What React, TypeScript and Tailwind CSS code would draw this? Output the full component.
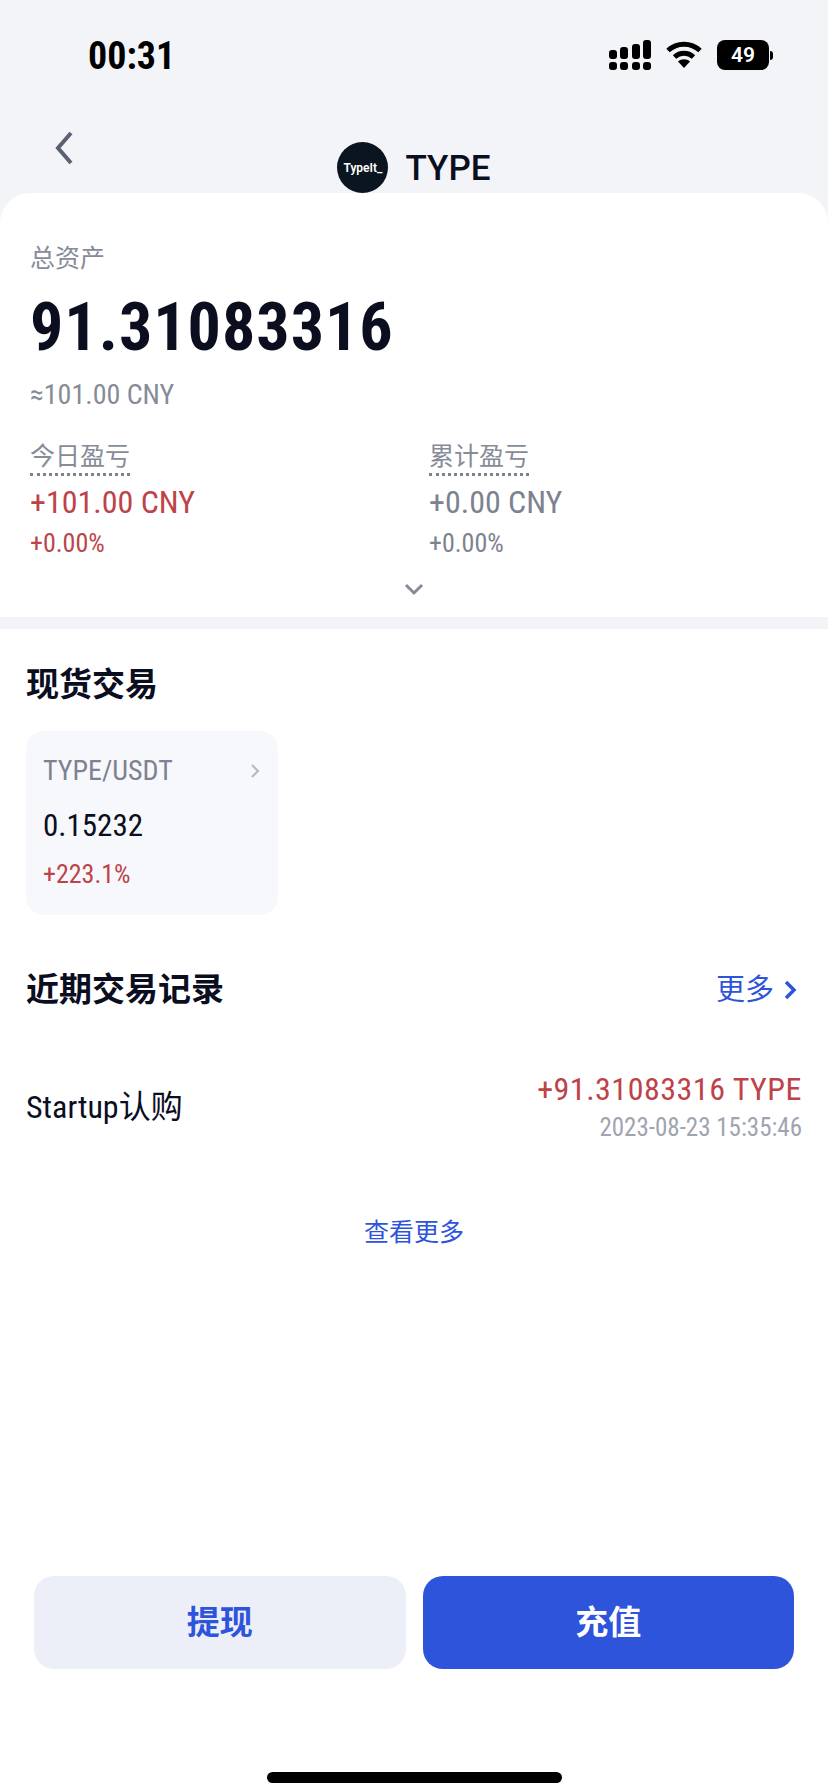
import type { ReactNode } from "react";

const SANS = "font-['Roboto','Noto_Sans_CJK_SC',sans-serif]";
const NARROW = "font-['Liberation_Sans_Narrow','Roboto_Condensed','Noto_Sans_CJK_SC',sans-serif]";

function Label({ children }: { children: ReactNode }) {
  return (
    <span className="inline-block border-b-[3px] border-dotted border-[#7d8290] pb-[1px] text-[25px] leading-[30px] text-[#868b98]">
      {children}
    </span>
  );
}

function Pnl({ label, value, pct, tone }: { label: string; value: string; pct: string; tone: string }) {
  return (
    <div className="w-[399px] shrink-0">
      <Label>{label}</Label>
      <div className={`mt-[8px] text-[32px] leading-[36px] ${NARROW} ${tone}`}>{value}</div>
      <div className={`mt-[7px] text-[26px] leading-[32px] ${NARROW} ${tone}`}>{pct}</div>
    </div>
  );
}

export default function App() {
  return (
    <div className={`flex h-[1792px] w-[828px] flex-col overflow-hidden bg-[#f2f4f8] text-[#0b0e1f] ${SANS}`}>
      <div className="flex h-[126px] shrink-0 items-start justify-between pl-[88px] pr-[55px] pt-[35px]">
        <span className={`text-[38px] font-bold leading-[42px] text-black ${NARROW}`}>00:31</span>
        <div className="mt-[5px] flex items-center gap-[15px]">
          <svg width="42" height="30" viewBox="0 0 42 30" fill="black">
            <rect x="0" y="10" width="8" height="9" rx="3" />
            <rect x="11" y="7" width="8" height="12" rx="3" />
            <rect x="23" y="4" width="8" height="15" rx="3" />
            <rect x="34" y="0" width="8" height="19" rx="3" />
            <rect x="0" y="22" width="8" height="8" rx="3" />
            <rect x="11" y="22" width="8" height="8" rx="3" />
            <rect x="23" y="22" width="8" height="8" rx="3" />
            <rect x="34" y="22" width="8" height="8" rx="3" />
          </svg>
          <svg width="36" height="28" viewBox="0 0 36 28" fill="none" stroke="black" strokeWidth="5">
            <path d="M2 9.5C11 1 25 1 34 9.5" />
            <path d="M8.5 16C14 11 22 11 27.5 16" />
            <path d="M18 27l-6-6.5c3.400-3 8.600-3 12 0z" fill="black" stroke="none" />
          </svg>
          <div className="flex items-center gap-[1px]">
            <span className="flex h-[30px] w-[52px] items-center justify-center rounded-[8px] bg-black text-[21px] font-semibold leading-none text-white">
              49
            </span>
            <span className="h-[9px] w-[3px] rounded-r-full bg-black" />
          </div>
        </div>
      </div>

      <div className="relative flex h-[67px] shrink-0 items-end justify-center">
        <svg className="absolute left-[52px] top-[4px]" width="26" height="36" viewBox="0 0 26 36" fill="none" stroke="#5b6072" strokeWidth="4">
          <path d="M19 3L6 18l13 15" />
        </svg>
        <div className="flex items-center gap-[17px]">
          <div className="flex h-[51px] w-[51px] items-center justify-center rounded-full bg-[#0b1520] text-[12px] font-semibold text-white">
            TypeIt_
          </div>
          <span className="pt-[3px] text-[35px] font-medium leading-[48px] text-[#0b0e1f]">TYPE</span>
        </div>
      </div>

      <div className="flex min-h-0 flex-1 flex-col rounded-t-[30px] bg-white">
        <div className="px-[30px] pt-[51px]">
          <div className="text-[25px] leading-[30px] text-[#868b98]">总资产</div>
          <div className={`mt-[19px] text-[66px] font-bold leading-[70px] tracking-[1px] ${NARROW}`}>91.31083316</div>
          <div className={`mt-[16px] text-[28px] leading-[32px] text-[#868b98] ${NARROW}`}>≈101.00 CNY</div>
          <div className="mt-[31px] flex">
            <Pnl label="今日盈亏" value="+101.00 CNY" pct="+0.00%" tone="text-[#bd4348]" />
            <Pnl label="累计盈亏" value="+0.00 CNY" pct="+0.00%" tone="text-[#7d8290]" />
          </div>
        </div>
        <div className="flex h-[58px] items-center justify-center pt-[2px]">
          <svg width="20" height="13" viewBox="0 0 20 13" fill="none" stroke="#868b98" strokeWidth="3">
            <path d="M2 2l8 8 8-8" />
          </svg>
        </div>
        <div className="h-[12px] bg-[#f2f4f8]" />

        <div className="px-[26px] pt-[34px]">
          <h2 className="text-[33px] font-bold leading-[44px]">现货交易</h2>
          <div className="mt-[24px] h-[184px] w-[252px] rounded-[18px] bg-[#f7f8fc] px-[17px] pt-[24px]">
            <div className="flex items-center justify-between pr-[1px]">
              <span className={`text-[28px] leading-[32px] text-[#7d8290] ${NARROW}`}>TYPE/USDT</span>
              <svg width="10" height="16" viewBox="0 0 10 16" fill="none" stroke="#b5b8c2" strokeWidth="2">
                <path d="M2 2l6 6-6 6" />
              </svg>
            </div>
            <div className={`mt-[22px] text-[31px] leading-[34px] text-[#0b0e1f] ${NARROW}`}>0.15232</div>
            <div className={`mt-[15px] text-[26px] leading-[32px] text-[#bd4348] ${NARROW}`}>+223.1%</div>
          </div>

          <div className="mt-[53px] flex items-center justify-between pr-[5px]">
            <h2 className="text-[33px] font-bold leading-[44px]">近期交易记录</h2>
            <div className="flex items-center gap-[9px] text-[29px] leading-[44px] text-[#2f54dc]">
              更多
              <svg width="14" height="22" viewBox="0 0 14 22" fill="none" stroke="#2f54dc" strokeWidth="3.500">
                <path d="M3 3l8 8-8 8" />
              </svg>
            </div>
          </div>

          <div className="mt-[59px] flex items-center justify-between">
            <span className={`text-[32px] leading-[40px] text-[#0b0e1f] ${NARROW}`}>Startup认购</span>
            <div className="text-right">
              <div className={`text-[32px] leading-[36px] tracking-[0.5px] text-[#bd4348] ${NARROW}`}>+91.31083316 TYPE</div>
              <div className={`mt-[6px] text-[25px] leading-[30px] text-[#a0a4b0] ${NARROW}`}>2023-08-23 15:35:46</div>
            </div>
          </div>

          <div className="mt-[74px] text-center text-[25px] leading-[32px] text-[#2f54dc]">查看更多</div>
        </div>

        <div className="mt-auto px-[34px]">
          <div className="flex gap-[17px]">
            <button type="button" className="h-[93px] flex-1 rounded-[20px] bg-[#eceff8] text-[33px] font-bold text-[#2f54dc]">
              提现
            </button>
            <button type="button" className="h-[93px] flex-1 rounded-[20px] bg-[#2f54dc] text-[33px] font-bold text-white">
              充值
            </button>
          </div>
        </div>
        <div className="flex h-[123px] items-end justify-center pb-[9px]">
          <div className="h-[11px] w-[295px] rounded-full bg-black" />
        </div>
      </div>
    </div>
  );
}
